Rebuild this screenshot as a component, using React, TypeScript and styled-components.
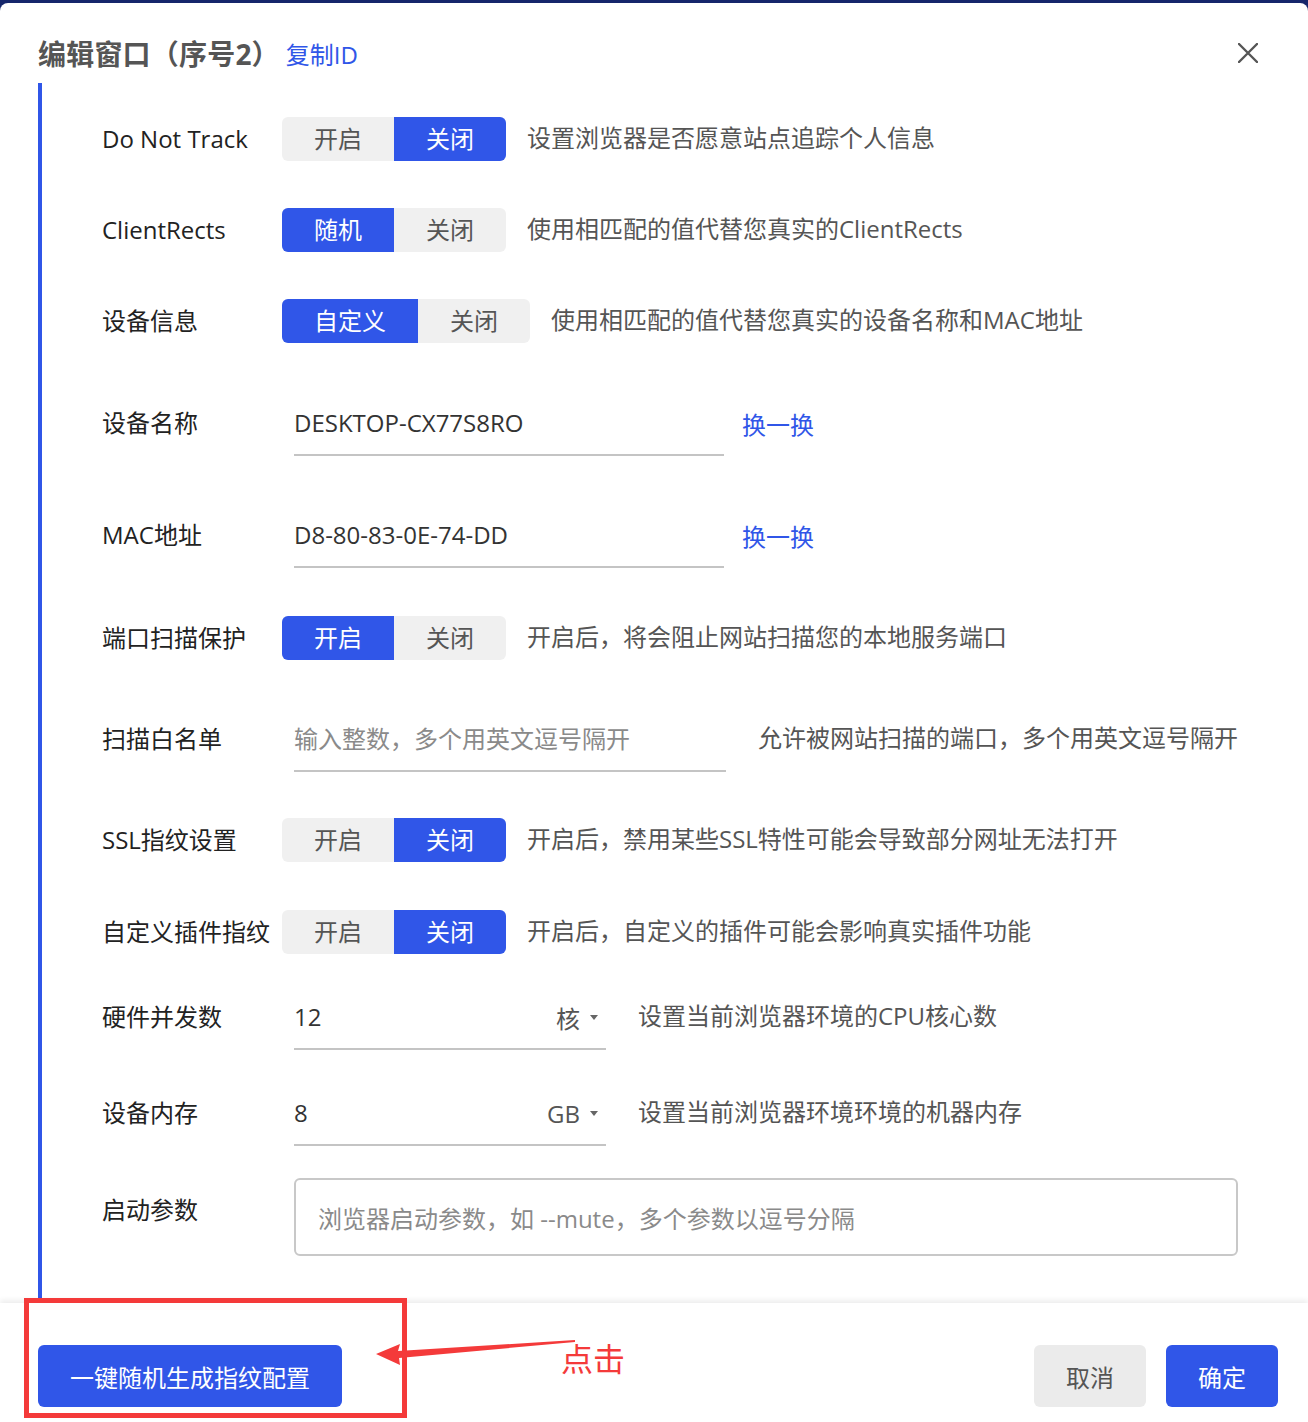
import React from 'react';
import styled, { createGlobalStyle } from 'styled-components';

const GlobalStyle = createGlobalStyle`
  html, body {
    margin: 0;
    padding: 0;
    background: #16266b;
  }
  * { box-sizing: border-box; }
`;

const BLUE = '#3056e8';
const FONT = `"Open Sans", "Noto Sans CJK SC", sans-serif`;

const Page = styled.div`
  width: 1308px;
  height: 1422px;
  padding-top: 3px;
  overflow: hidden;
  font-family: ${FONT};
`;

const Modal = styled.div`
  background: #fff;
  height: 1419px;
  border-radius: 8px 8px 0 0;
  display: flex;
  flex-direction: column;
`;

const Header = styled.div`
  height: 80px;
  display: flex;
  align-items: center;
  padding: 20px 38px 0;
  gap: 6px;
`;

const Title = styled.h2`
  margin: 0;
  font-size: 28px;
  font-weight: 700;
  color: #555;
  letter-spacing: 0.2px;
`;

const CopyLink = styled.a`
  font-size: 24px;
  color: ${BLUE};
  cursor: pointer;
`;

const CloseBtn = styled.button`
  margin-left: auto;
  margin-right: 10px;
  border: 0;
  background: none;
  padding: 0;
  width: 24px;
  height: 24px;
  display: flex;
  align-items: center;
  justify-content: center;
  cursor: pointer;
`;

const Body = styled.div`
  flex: 1;
  margin-left: 38px;
  border-left: 4px solid ${BLUE};
  padding: 11px 0 0 60px;
  display: flex;
  flex-direction: column;
`;

const Row = styled.div<{ $h: number; $top?: boolean }>`
  height: ${p => p.$h}px;
  display: flex;
  align-items: ${p => (p.$top ? 'flex-start' : 'center')};
  padding-top: ${p => (p.$top ? 10 : 0)}px;
`;

const Label = styled.div<{ $top?: boolean }>`
  width: 180px;
  flex-shrink: 0;
  font-size: 24px;
  line-height: 44px;
  color: #222;
  white-space: nowrap;
  padding-top: ${p => (p.$top ? 10 : 0)}px;
`;

const Segment = styled.div`
  display: flex;
  height: 44px;
  border-radius: 6px;
  background: #f0f0f0;
  overflow: hidden;
  flex-shrink: 0;
`;

const SegItem = styled.div<{ $active?: boolean }>`
  padding: 0 32px;
  font-size: 24px;
  line-height: 44px;
  color: ${p => (p.$active ? '#fff' : '#555')};
  background: ${p => (p.$active ? BLUE : 'transparent')};
  cursor: pointer;
`;

const Desc = styled.div<{ $gap: number }>`
  margin-left: ${p => p.$gap}px;
  font-size: 24px;
  line-height: 44px;
  margin-top: -3px;
  color: #555;
  white-space: nowrap;
`;

const Field = styled.div<{ $w: number }>`
  margin-left: 12px;
  width: ${p => p.$w}px;
  padding: 11px 0 9px;
  border-bottom: 2px solid #c4c4c4;
  display: flex;
  align-items: center;
  height: 66px;
  flex-shrink: 0;
`;

const FieldText = styled.span<{ $placeholder?: boolean }>`
  flex: 1;
  font-size: 24px;
  line-height: 44px;
  color: ${p => (p.$placeholder ? '#8a8a8a' : '#333')};
`;

const Unit = styled.span`
  display: flex;
  align-items: center;
  gap: 10px;
  margin-right: 8px;
  font-size: 24px;
  color: #555;
`;

const Caret = styled.span`
  width: 0;
  height: 0;
  border-left: 4.5px solid transparent;
  border-right: 4.5px solid transparent;
  border-top: 5px solid #666;
`;

const Action = styled.a`
  margin-left: 18px;
  font-size: 24px;
  color: ${BLUE};
  cursor: pointer;
`;

const TextArea = styled.div`
  margin-left: 12px;
  width: 944px;
  height: 78px;
  border: 2px solid #c8c8c8;
  border-radius: 6px;
  padding: 0 22px;
  display: flex;
  align-items: center;
  font-size: 24px;
  color: #8a8a8a;
`;

const Footer = styled.div`
  position: relative;
  height: 119px;
  padding: 42px 30px 0 38px;
  display: flex;
  align-items: flex-start;
  box-shadow: 0 -3px 5px rgba(0, 0, 0, 0.07);
`;

const Btn = styled.button<{ $variant: 'primary' | 'ghost'; $w: number }>`
  width: ${p => p.$w}px;
  height: 62px;
  border: 0;
  border-radius: 6px;
  font-family: ${FONT};
  font-size: 24px;
  cursor: pointer;
  background: ${p => (p.$variant === 'primary' ? BLUE : '#ebebeb')};
  color: ${p => (p.$variant === 'primary' ? '#fff' : '#555')};
`;

const FooterRight = styled.div`
  margin-left: auto;
  display: flex;
  gap: 20px;
`;

const Highlight = styled.div`
  position: absolute;
  left: 24px;
  top: -5px;
  width: 383px;
  height: 120px;
  border: 5px solid #f43a3a;
  pointer-events: none;
`;

const Arrow = styled.svg`
  position: absolute;
  left: 370px;
  top: 30px;
  pointer-events: none;
`;

const Note = styled.span`
  position: absolute;
  left: 561px;
  top: 32px;
  font-family: "Noto Sans CJK SC", sans-serif;
  font-size: 32px;
  line-height: 44px;
  color: #f43a3a;
`;

const Seg = ({ items, active }: { items: string[]; active: number }) => (
  <Segment>
    {items.map((t, i) => (
      <SegItem key={t} $active={i === active}>
        {t}
      </SegItem>
    ))}
  </Segment>
);

export default function App() {
  return (
    <>
      <GlobalStyle />
      <Page>
        <Modal>
          <Header>
            <Title>编辑窗口（序号2）</Title>
            <CopyLink>复制ID</CopyLink>
            <CloseBtn aria-label="close">
              <svg width="20" height="20" viewBox="0 0 20 20">
                <path d="M1 1 L19 19 M19 1 L1 19" stroke="#555" strokeWidth="2.4" strokeLinecap="round" />
              </svg>
            </CloseBtn>
          </Header>

          <Body>
            <Row $h={90}>
              <Label>Do Not Track</Label>
              <Seg items={['开启', '关闭']} active={1} />
              <Desc $gap={21}>设置浏览器是否愿意站点追踪个人信息</Desc>
            </Row>
            <Row $h={92}>
              <Label>ClientRects</Label>
              <Seg items={['随机', '关闭']} active={0} />
              <Desc $gap={21}>使用相匹配的值代替您真实的ClientRects</Desc>
            </Row>
            <Row $h={90}>
              <Label>设备信息</Label>
              <Seg items={['自定义', '关闭']} active={0} />
              <Desc $gap={21}>使用相匹配的值代替您真实的设备名称和MAC地址</Desc>
            </Row>
            <Row $h={114}>
              <Label>设备名称</Label>
              <Field $w={430}>
                <FieldText>DESKTOP-CX77S8RO</FieldText>
              </Field>
              <Action>换一换</Action>
            </Row>
            <Row $h={110}>
              <Label>MAC地址</Label>
              <Field $w={430}>
                <FieldText>D8-80-83-0E-74-DD</FieldText>
              </Field>
              <Action>换一换</Action>
            </Row>
            <Row $h={96}>
              <Label>端口扫描保护</Label>
              <Seg items={['开启', '关闭']} active={0} />
              <Desc $gap={21}>开启后，将会阻止网站扫描您的本地服务端口</Desc>
            </Row>
            <Row $h={106}>
              <Label>扫描白名单</Label>
              <Field $w={432}>
                <FieldText $placeholder>输入整数，多个用英文逗号隔开</FieldText>
              </Field>
              <Desc $gap={32}>允许被网站扫描的端口，多个用英文逗号隔开</Desc>
            </Row>
            <Row $h={96}>
              <Label>SSL指纹设置</Label>
              <Seg items={['开启', '关闭']} active={1} />
              <Desc $gap={21}>开启后，禁用某些SSL特性可能会导致部分网址无法打开</Desc>
            </Row>
            <Row $h={88}>
              <Label>自定义插件指纹</Label>
              <Seg items={['开启', '关闭']} active={1} />
              <Desc $gap={21}>开启后，自定义的插件可能会影响真实插件功能</Desc>
            </Row>
            <Row $h={82}>
              <Label>硬件并发数</Label>
              <Field $w={312}>
                <FieldText>12</FieldText>
                <Unit>
                  核<Caret />
                </Unit>
              </Field>
              <Desc $gap={32}>设置当前浏览器环境的CPU核心数</Desc>
            </Row>
            <Row $h={110}>
              <Label>设备内存</Label>
              <Field $w={312}>
                <FieldText>8</FieldText>
                <Unit>
                  GB<Caret />
                </Unit>
              </Field>
              <Desc $gap={32}>设置当前浏览器环境环境的机器内存</Desc>
            </Row>
            <Row $h={135} $top>
              <Label $top>启动参数</Label>
              <TextArea>浏览器启动参数，如 --mute，多个参数以逗号分隔</TextArea>
            </Row>
          </Body>

          <Footer>
            <Btn $variant="primary" $w={304}>一键随机生成指纹配置</Btn>
            <FooterRight>
              <Btn $variant="ghost" $w={112}>取消</Btn>
              <Btn $variant="primary" $w={112}>确定</Btn>
            </FooterRight>
            <Highlight />
            <Arrow width="210" height="40" viewBox="0 0 210 40">
              <polygon points="6,21 30,11 28,18 205,7 205,9 29,25 30,32" fill="#f43a3a" />
            </Arrow>
            <Note>点击</Note>
          </Footer>
        </Modal>
      </Page>
    </>
  );
}
